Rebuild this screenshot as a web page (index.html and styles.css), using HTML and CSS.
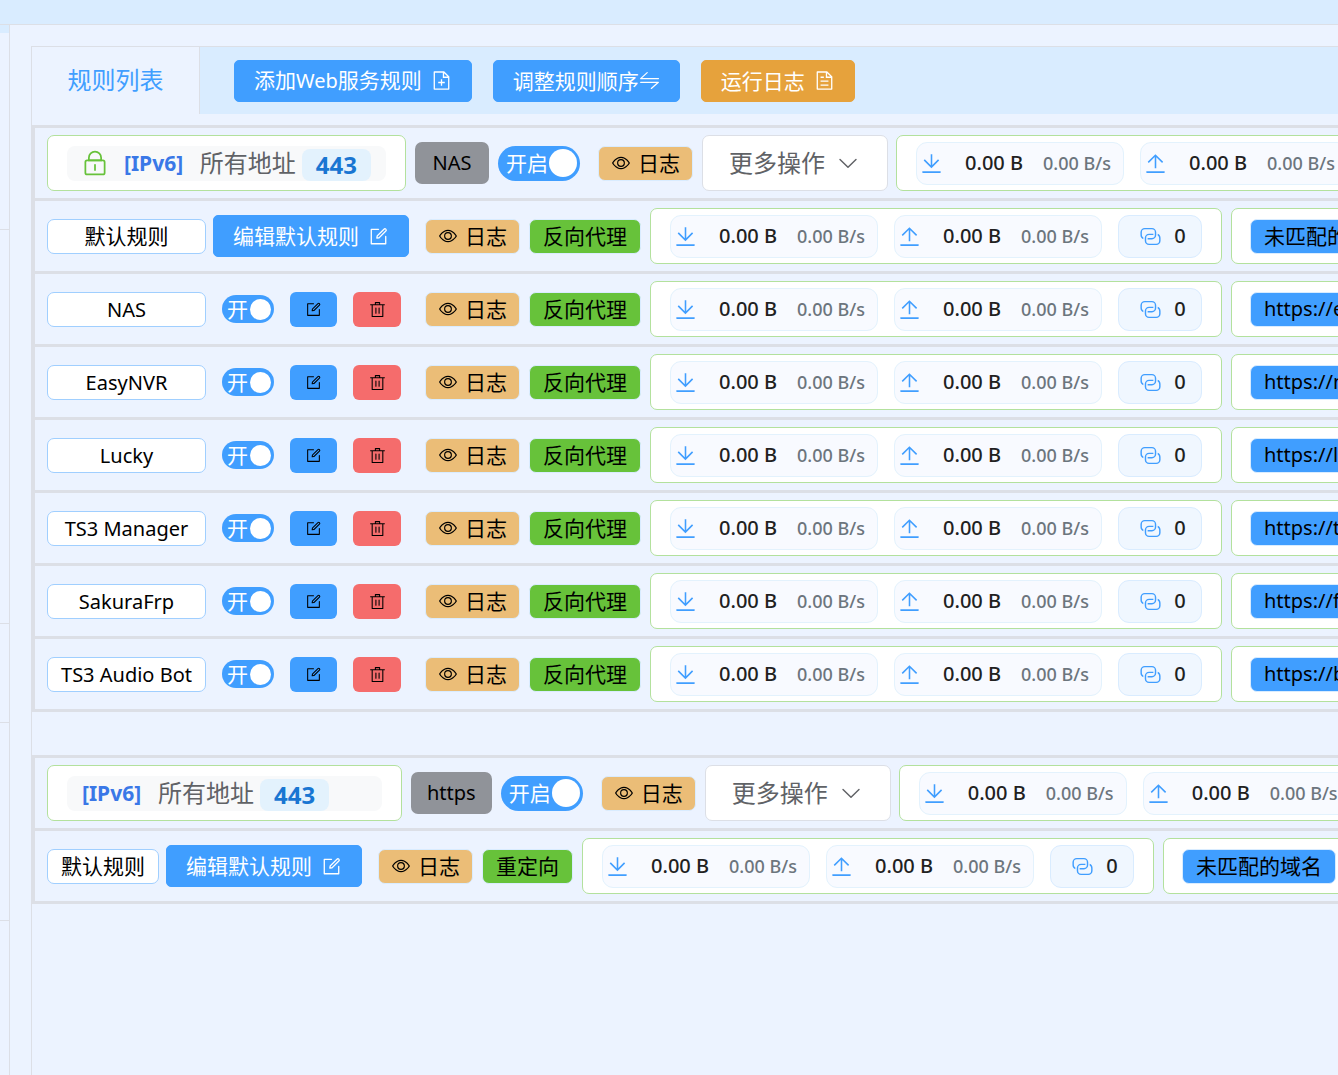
FILE: index.html
```html
<!DOCTYPE html>
<html lang="zh-CN">
<head>
    <meta charset="UTF-8" />
    <meta name="viewport" content="width=device-width, initial-scale=1.0" />
    <title>Web服务规则</title>
    <link rel="stylesheet" href="styles.css">
</head>
<body>

    <!-- Icon set -->
    <svg class="sprite" aria-hidden="true">
        <symbol id="i-doc-add" viewBox="0 0 1024 1024"><path fill="currentColor" d="M832 384H576V128H192v768h640zm-26.500-64L640 154.500V320zM160 64h480l256 256v608a32 32 0 0 1-32 32H160a32 32 0 0 1-32-32V96a32 32 0 0 1 32-32m320 512V448h64v128h128v64H544v128h-64V640H352v-64z"/></symbol>
        <symbol id="i-doc" viewBox="0 0 1024 1024"><path fill="currentColor" d="M832 384H576V128H192v768h640zm-26.500-64L640 154.500V320zM160 64h480l256 256v608a32 32 0 0 1-32 32H160a32 32 0 0 1-32-32V96a32 32 0 0 1 32-32m160 448h384v64H320zm0-192h160v64H320zm0 384h384v64H320z"/></symbol>
        <symbol id="i-swap" viewBox="0 0 1024 1024"><path fill="none" stroke="currentColor" stroke-width="60" stroke-linejoin="round" stroke-linecap="round" d="M400 130 80 420H950M80 600H944L600 900"/></symbol>
        <symbol id="i-edit" viewBox="0 0 1024 1024"><path fill="currentColor" d="M832 512a32 32 0 1 1 64 0v352a32 32 0 0 1-32 32H160a32 32 0 0 1-32-32V160a32 32 0 0 1 32-32h352a32 32 0 0 1 0 64H192v640h640z"/><path fill="currentColor" d="m469.952 554.240 52.800-7.552L847.104 222.400a32 32 0 1 0-45.248-45.248L477.440 501.440l-7.552 52.800zm422.400-422.400a96 96 0 0 1 0 135.808l-331.840 331.840a32 32 0 0 1-18.112 9.088L436.800 623.680a32 32 0 0 1-36.224-36.224l15.104-105.600a32 32 0 0 1 9.024-18.112l331.904-331.840a96 96 0 0 1 135.744 0z"/></symbol>
        <symbol id="i-delete" viewBox="0 0 1024 1024"><path fill="currentColor" d="M160 256H96a32 32 0 0 1 0-64h256V95.936a32 32 0 0 1 32-32h256a32 32 0 0 1 32 32V192h256a32 32 0 1 1 0 64h-64v672a32 32 0 0 1-32 32H192a32 32 0 0 1-32-32zm448-64v-64H416v64zM224 896h576V256H224zm192-128a32 32 0 0 1-32-32V416a32 32 0 0 1 64 0v320a32 32 0 0 1-32 32m192 0a32 32 0 0 1-32-32V416a32 32 0 0 1 64 0v320a32 32 0 0 1-32 32"/></symbol>
        <symbol id="i-view" viewBox="0 0 1024 1024"><path fill="currentColor" d="M512 160c320 0 512 352 512 352S832 864 512 864 0 512 0 512s192-352 512-352m0 64c-225.280 0-384.128 208.064-436.800 288 52.608 79.872 211.456 288 436.800 288 225.280 0 384.128-208.064 436.800-288-52.608-79.872-211.456-288-436.800-288m0 64a224 224 0 1 1 0 448 224 224 0 0 1 0-448m0 64a160.192 160.192 0 0 0-160 160c0 88.192 71.744 160 160 160s160-71.808 160-160-71.744-160-160-160"/></symbol>
        <symbol id="i-lock" viewBox="0 0 1024 1024"><path fill="currentColor" d="M224 448a32 32 0 0 0-32 32v384a32 32 0 0 0 32 32h576a32 32 0 0 0 32-32V480a32 32 0 0 0-32-32zm0-64h576a96 96 0 0 1 96 96v384a96 96 0 0 1-96 96H224a96 96 0 0 1-96-96V480a96 96 0 0 1 96-96"/><path fill="currentColor" d="M512 544a32 32 0 0 1 32 32v192a32 32 0 1 1-64 0V576a32 32 0 0 1 32-32m192-160v-64a192 192 0 1 0-384 0v64zM512 64a256 256 0 0 1 256 256v128H256V320A256 256 0 0 1 512 64"/></symbol>
        <symbol id="i-arrow" viewBox="0 0 1024 1024"><path fill="currentColor" d="M831.872 340.864 512 652.672 192.128 340.864a30.592 30.592 0 0 0-42.752 0 29.120 29.120 0 0 0 0 41.600L489.664 714.240a32 32 0 0 0 44.672 0l340.288-331.712a29.120 29.120 0 0 0 0-41.728 30.592 30.592 0 0 0-42.752 0z"/></symbol>
        <symbol id="i-down" viewBox="0 0 1024 1024"><path fill="currentColor" d="M160 832h704a32 32 0 1 1 0 64H160a32 32 0 1 1 0-64m384-253.696 236.288-236.352 45.248 45.248L508.800 704 192 387.200l45.248-45.248L480 584.704V128h64z"/></symbol>
        <symbol id="i-up" viewBox="0 0 1024 1024"><path fill="currentColor" d="M160 832h704a32 32 0 1 1 0 64H160a32 32 0 1 1 0-64m384-578.304V704h-64V247.296L237.248 490.048 192 444.800 508.800 128l316.800 316.800-45.312 45.248z"/></symbol>
        <symbol id="i-link" viewBox="0 0 1024 1024"><path fill="currentColor" d="M640 384v64H448a128 128 0 0 0-128 128v128a128 128 0 0 0 128 128h320a128 128 0 0 0 128-128V576a128 128 0 0 0-64-110.848V394.880c74.560 26.368 128 97.472 128 181.056v128a192 192 0 0 1-192 192H448a192 192 0 0 1-192-192V576a192 192 0 0 1 192-192z"/><path fill="currentColor" d="M384 640v-64h192a128 128 0 0 0 128-128V320a128 128 0 0 0-128-128H256a128 128 0 0 0-128 128v128a128 128 0 0 0 64 110.848v70.272A192.064 192.064 0 0 1 64 448V320a192 192 0 0 1 192-192h320a192 192 0 0 1 192 192v128a192 192 0 0 1-192 192z"/></symbol>
    </svg>

    <header class="topbar"></header>

    <div class="layout">
        <aside class="sidebar">
            <div class="side-head"></div>
            <div class="side-item"></div>
            <div class="side-item side-group"></div>
            <div class="side-item side-short"></div>
            <div class="side-item"></div>
        </aside>

        <main class="panel">
            <div class="toolbar">
                <div class="tab">规则列表</div>
                <button class="btn"><span>添加<span class="latin">Web</span>服务规则</span> <svg class="icon"><use href="#i-doc-add"/></svg></button>
                <button class="btn btn-tight">调整规则顺序<svg class="icon"><use href="#i-swap"/></svg></button>
                <button class="btn btn-warning">运行日志 <svg class="icon"><use href="#i-doc"/></svg></button>
            </div>
            <div id="ruleGroups"></div>
        </main>
    </div>

    <script src="rules.js"></script>
</body>
</html>
```
FILE: rules.js
```js
const groups = [
  {
    name: "NAS",
    lock: true,
    type: "反向代理",
    rules: [
      { name: "NAS", url: "https://e" },
      { name: "EasyNVR", url: "https://n" },
      { name: "Lucky", url: "https://l" },
      { name: "TS3 Manager", url: "https://t" },
      { name: "SakuraFrp", url: "https://f" },
      { name: "TS3 Audio Bot", url: "https://b" }
    ]
  },
  { name: "https", lock: false, type: "重定向", rules: [] }
];

function icon(name) {
  return `<svg class="icon" aria-hidden="true"><use href="#i-${name}"/></svg>`;
}

function flow(dir) {
  return `<div class="flow">${icon(dir)}<span class="total">0.00 B</span><span class="rate">0.00 B/s</span></div>`;
}

function stats() {
  return `
    <div class="card stats">
      ${flow("down")}
      ${flow("up")}
      <div class="conn">${icon("link")}<span>0</span></div>
    </div>`;
}

function logButton() {
  return `<button class="tag tag-log">${icon("view")}日志</button>`;
}

function toggle(text, label, cls) {
  return `<label class="switch ${cls}"><input type="checkbox" checked aria-label="${label}" /><span>${text}</span></label>`;
}

function target(text, cls) {
  return `<div class="card target"><span class="tag tag-url ${cls}">${text}</span></div>`;
}

function headRow(g) {
  return `
    <div class="row">
      <div class="card listen">
        <div class="address ${g.lock ? "secure" : ""}">
          ${g.lock ? icon("lock") : ""}
          <b class="ip">[IPv6]</b><span class="host">所有地址</span><b class="port">443</b>
        </div>
      </div>
      <span class="tag tag-group">${g.name}</span>
      ${toggle("开启", g.name, "switch-lg")}
      ${logButton()}
      <button class="more">更多操作 ${icon("arrow")}</button>
      ${stats()}
    </div>`;
}

function defaultRow(g) {
  return `
    <div class="row">
      <span class="name ${g.rules.length ? "wide" : ""}">默认规则</span>
      <button class="btn btn-default">编辑默认规则 ${icon("edit")}</button>
      ${logButton()}
      <span class="tag tag-type">${g.type}</span>
      ${stats()}
      ${target("未匹配的域名", "")}
    </div>`;
}

function ruleRow(g, r) {
  return `
    <div class="row">
      <span class="name wide latin">${r.name}</span>
      <div class="actions">
        ${toggle("开", r.name, "switch-sm")}
        <button class="btn-icon" aria-label="编辑">${icon("edit")}</button>
        <button class="btn-icon danger" aria-label="删除">${icon("delete")}</button>
      </div>
      ${logButton()}
      <span class="tag tag-type">${g.type}</span>
      ${stats()}
      ${target(r.url, "latin")}
    </div>`;
}

document.getElementById("ruleGroups").innerHTML = groups.map(g => `
  <section class="group">
    ${headRow(g)}
    ${defaultRow(g)}
    ${g.rules.map(r => ruleRow(g, r)).join("")}
  </section>`).join("");
```
FILE: styles.css
```css
* {
    box-sizing: border-box;
}

body {
    margin: 0;
    min-height: 100vh;
    display: flex;
    flex-direction: column;
    overflow-x: hidden;
    background-color: #ecf3ff;
    color: #000;
    font-family: "Noto Sans", "Noto Sans CJK SC", sans-serif;
    font-size: 21px;
    line-height: 30px;
}

button {
    margin: 0;
    font: inherit;
    cursor: pointer;
}

.latin {
    font-size: 20px;
}

.sprite {
    display: none;
}

.icon {
    width: 21px;
    height: 21px;
    flex: none;
}

.topbar {
    height: 25px;
    background-color: #d9ecff;
    border-bottom: 1px solid #dcdfe6;
}

.layout {
    flex: 1;
    display: flex;
}

/* Sidebar */
.sidebar {
    flex: none;
    width: 10px;
    border-right: 1px solid #dcdfe6;
}

.side-head {
    height: 8px;
    background-color: #d9ecff;
}

.side-item {
    height: 197px;
    border-bottom: 1px solid #dcdfe6;
}

.side-group {
    height: 394px;
}

.side-short {
    height: 99px;
}

.side-item:last-child {
    height: 198px;
}

/* Main panel */
.panel {
    flex: 1;
    min-width: 0;
    margin: 21px 0 0 21px;
    overflow: hidden;
    border-top: 1px solid #dcdfe6;
    border-left: 1px solid #dcdfe6;
}

.toolbar {
    display: flex;
    align-items: center;
    gap: 21px;
    height: 67px;
    margin-bottom: 11px;
    background-color: #d9ecff;
}

.tab {
    width: 168px;
    height: 67px;
    margin-right: 13px;
    border-right: 1px solid #dcdfe6;
    background-color: #ecf3ff;
    color: #409eff;
    font-size: 24px;
    line-height: 66px;
    text-align: center;
}

.btn {
    display: flex;
    align-items: center;
    gap: 9px;
    height: 42px;
    padding: 0 19px;
    border: 1px solid #409eff;
    border-radius: 5px;
    background-color: #409eff;
    color: #fff;
    white-space: nowrap;
}

.btn-tight {
    gap: 0;
}

.btn-warning {
    border-color: #e6a23c;
    background-color: #e6a23c;
}

/* Rule groups */
.group {
    margin-bottom: 43px;
    border-top: 3px solid #dcdfe6;
    border-left: 3px solid #dcdfe6;
}

.row {
    display: flex;
    align-items: center;
    height: 73px;
    padding-left: 12px;
    border-bottom: 3px solid #dcdfe6;
    white-space: nowrap;
}

.row > * {
    flex: none;
}

.card {
    display: flex;
    align-items: center;
    height: 56px;
    padding: 0 19px;
    border: 1px solid #b3e19d;
    border-radius: 7px;
    background-color: #fff;
}

.address {
    display: flex;
    align-items: center;
    width: 315px;
    height: 35px;
    padding: 0 15px;
    border-radius: 8px;
    background-color: #f8f9fa;
}

.address.secure {
    width: 319px;
    padding-left: 14px;
}

.address .icon {
    width: 28px;
    height: 28px;
    margin-right: 15px;
    color: #67c23a;
}

.ip {
    width: 76px;
    color: #3a78e7;
}

.host {
    color: #606266;
    font-size: 24px;
}

.port {
    align-self: flex-end;
    height: 32px;
    margin-left: 6px;
    padding: 0 14px;
    border-radius: 8px;
    background-color: #e3f2fd;
    color: #1976d2;
    font-size: 24px;
    line-height: 32px;
}

.tag {
    display: flex;
    align-items: center;
    height: 35px;
    padding: 0 13px;
    border: 1px solid #d9ecff;
    border-radius: 7px;
    color: #000;
}

.tag-group {
    justify-content: center;
    min-width: 74px;
    height: 42px;
    margin: 0 9px;
    padding: 0 16px;
    border: none;
    background-color: #909399;
    font-size: 20px;
}

.tag-log {
    gap: 8px;
    width: 95px;
    background-color: #ebbd77;
}

.tag-log .icon {
    width: 18px;
    height: 18px;
}

.tag-type {
    margin: 0 9px;
    background-color: #67c23a;
}

.tag-url {
    min-width: 152px;
    background-color: #409eff;
}

.more {
    display: flex;
    align-items: center;
    gap: 11px;
    width: 186px;
    height: 56px;
    margin: 0 8px 0 9px;
    padding: 0 26px;
    border: 1px solid #dcdfe6;
    border-radius: 7px;
    background-color: #fff;
    color: #606266;
    font-size: 24px;
}

.more .icon {
    width: 24px;
    height: 24px;
}

.name {
    width: 112px;
    height: 35px;
    border: 1px solid #a0cfff;
    border-radius: 7px;
    background-color: #fff;
    line-height: 33px;
    text-align: center;
}

.name.wide {
    width: 159px;
}

.btn-default {
    margin: 0 16px 0 7px;
}

.actions {
    display: flex;
    align-items: center;
    gap: 16px;
    margin: 0 24px 0 16px;
}

.btn-icon {
    display: flex;
    align-items: center;
    justify-content: center;
    width: 47px;
    height: 35px;
    padding: 0;
    border: none;
    border-radius: 6px;
    background-color: #409eff;
    color: #000;
}

.btn-icon .icon {
    width: 17px;
    height: 17px;
}

.btn-icon.danger {
    width: 48px;
    background-color: #f56c6c;
}

/* Switches */
.switch {
    position: relative;
    display: flex;
    align-items: center;
    justify-content: space-between;
    border-radius: 18px;
    background-color: #409eff;
    color: #fff;
    cursor: pointer;
}

.switch input {
    position: absolute;
    inset: 0;
    margin: 0;
    opacity: 0;
}

.switch::after {
    content: "";
    border-radius: 50%;
    background-color: #fff;
}

.switch-lg {
    width: 82px;
    height: 35px;
    margin-right: 18px;
    padding: 0 3px 0 8px;
}

.switch-lg::after {
    width: 28px;
    height: 28px;
}

.switch-sm {
    width: 52px;
    height: 28px;
    padding: 0 3px 0 5px;
}

.switch-sm::after {
    width: 21px;
    height: 21px;
}

/* Traffic */
.stats {
    gap: 16px;
}

.flow,
.conn {
    display: flex;
    align-items: center;
    height: 43px;
    border: 1px solid #e3f2fd;
    border-radius: 11px;
    background-color: #f8faff;
    font-weight: 500;
}

.flow {
    width: 208px;
    padding-left: 2px;
}

.flow .icon {
    width: 25px;
    height: 25px;
    color: #409eff;
}

.total {
    width: 78px;
    margin-left: 21px;
    color: #212121;
    font-size: 20px;
}

.rate {
    color: #6c757d;
    font-size: 18px;
}

.conn {
    justify-content: center;
    gap: 12px;
    width: 84px;
    padding-left: 5px;
    border-color: #d9ecff;
    background-color: #f0f7ff;
    color: #212121;
    font-size: 20px;
}

.conn .icon {
    width: 23px;
    height: 23px;
    color: #409eff;
}

.target {
    min-width: 240px;
    margin-left: 9px;
    padding: 0 18px;
}
```
